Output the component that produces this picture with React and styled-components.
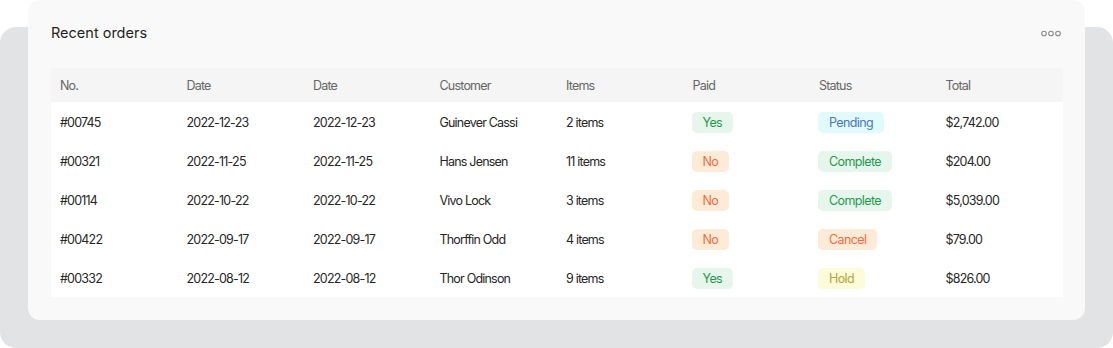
import styled, { createGlobalStyle } from 'styled-components'

const GlobalStyle = createGlobalStyle`
  body {
    margin: 0;
    background: #ffffff;
    font-family: Inter, "Noto Sans", sans-serif;
    color: #1f1f1f;
  }
`

const orders = [
  { no: '#00745', date: '2022-12-23', due: '2022-12-23', customer: 'Guinever Cassi', items: '2 items', paid: 'Yes', status: 'Pending', total: '$2,742.00' },
  { no: '#00321', date: '2022-11-25', due: '2022-11-25', customer: 'Hans Jensen', items: '11 items', paid: 'No', status: 'Complete', total: '$204.00' },
  { no: '#00114', date: '2022-10-22', due: '2022-10-22', customer: 'Vivo Lock', items: '3 items', paid: 'No', status: 'Complete', total: '$5,039.00' },
  { no: '#00422', date: '2022-09-17', due: '2022-09-17', customer: 'Thorffin Odd', items: '4 items', paid: 'No', status: 'Cancel', total: '$79.00' },
  { no: '#00332', date: '2022-08-12', due: '2022-08-12', customer: 'Thor Odinson', items: '9 items', paid: 'Yes', status: 'Hold', total: '$826.00' },
]

const tones = {
  green: { bg: '#e6f6ec', fg: '#1f9a4d' },
  orange: { bg: '#fdebd7', fg: '#f26b3a' },
  blue: { bg: '#e1fbfd', fg: '#4a76c0' },
  yellow: { bg: '#fdfbd8', fg: '#b3a43f' },
}

const paidTone = { Yes: 'green', No: 'orange' }
const statusTone = { Pending: 'blue', Complete: 'green', Cancel: 'orange', Hold: 'yellow' }

const Page = styled.div`
  position: relative;
  height: 348px;
  overflow: hidden;
`

const Backdrop = styled.div`
  position: absolute;
  left: 0;
  right: 0;
  top: 27px;
  height: 321px;
  background: #e2e3e5;
  border-radius: 16px;
`

const Card = styled.section`
  position: relative;
  margin: 0 28px;
  height: 320px;
  box-sizing: border-box;
  background: #f9f9f9;
  border-radius: 12px;
  padding: 0 22px 0 23px;
`

const Header = styled.div`
  display: flex;
  align-items: center;
  justify-content: space-between;
  height: 68px;
  padding-bottom: 3px;
  box-sizing: border-box;
`

const Title = styled.h2`
  margin: 0;
  font-size: 14.5px;
  font-weight: 400;
  color: #1f1f1f;
`

const More = styled.button`
  border: 0;
  background: none;
  padding: 0;
  margin: 1px 2px 0 0;
  display: flex;
  cursor: pointer;
`

const Table = styled.div`
  display: grid;
  grid-template-columns: repeat(8, 1fr);
  font-size: 12.5px;
  letter-spacing: -0.8px;
`

const Row = styled.div`
  display: contents;
`

const HeadCell = styled.div`
  height: 34px;
  display: flex;
  align-items: center;
  padding-left: 9px;
  box-sizing: border-box;
  background: #f5f5f5;
  color: #666666;
`

const Cell = styled.div`
  height: 39px;
  display: flex;
  align-items: center;
  padding-left: 9px;
  padding-top: 1px;
  box-sizing: border-box;
  background: #ffffff;
  color: #262626;
`

const Badge = styled.span`
  display: inline-block;
  margin-left: -1px;
  padding: 3px 11px;
  line-height: 15px;
  border-radius: 5px;
  letter-spacing: -0.6px;
  background: ${({ tone }) => tones[tone].bg};
  color: ${({ tone }) => tones[tone].fg};
`

const Dots = () => (
  <svg width="20" height="7" viewBox="0 0 20 7" fill="none" stroke="#8a8a8a" strokeWidth="1.1">
    <circle cx="3" cy="3.5" r="2.3" />
    <circle cx="10" cy="3.5" r="2.3" />
    <circle cx="17" cy="3.5" r="2.3" />
  </svg>
)

const columns = ['No.', 'Date', 'Date', 'Customer', 'Items', 'Paid', 'Status', 'Total']

const App = () => (
  <>
    <GlobalStyle />
    <Page>
      <Backdrop />
      <Card>
        <Header>
          <Title>Recent orders</Title>
          <More aria-label="More">
            <Dots />
          </More>
        </Header>
        <Table>
          <Row>
            {columns.map((c, i) => (
              <HeadCell key={i}>{c}</HeadCell>
            ))}
          </Row>
          {orders.map(o => (
            <Row key={o.no}>
              <Cell>{o.no}</Cell>
              <Cell>{o.date}</Cell>
              <Cell>{o.due}</Cell>
              <Cell>{o.customer}</Cell>
              <Cell>{o.items}</Cell>
              <Cell>
                <Badge tone={paidTone[o.paid]}>{o.paid}</Badge>
              </Cell>
              <Cell>
                <Badge tone={statusTone[o.status]}>{o.status}</Badge>
              </Cell>
              <Cell>{o.total}</Cell>
            </Row>
          ))}
        </Table>
      </Card>
    </Page>
  </>
)

export default App
